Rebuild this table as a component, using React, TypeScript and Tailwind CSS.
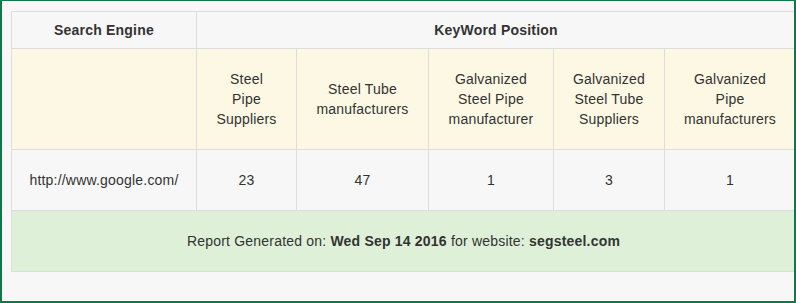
const keywords = [
  ["Steel", "Pipe", "Suppliers"],
  ["Steel Tube", "manufacturers"],
  ["Galvanized", "Steel Pipe", "manufacturer"],
  ["Galvanized", "Steel Tube", "Suppliers"],
  ["Galvanized", "Pipe", "manufacturers"]
];

const positions = [23, 47, 1, 3, 1];

const colWidths = ["w-[185px]", "w-[100px]", "w-[132px]", "w-[125px]", "w-[111px]", "w-[131px]"];

export default function App() {
  return (
    <div className="h-[303px] w-[796px] overflow-hidden border-t border-r-2 border-b-2 border-l-2 border-[#0b7a4b] bg-[#f7f7f7] pt-[10px] pl-[9px] font-['Liberation_Sans',Arial,sans-serif] text-[14px] leading-[20px] tracking-[0.2px] text-[#333]">
      <table className="w-[784px] table-fixed border-collapse text-center">
        <colgroup>
          {colWidths.map((w) => (
            <col key={w} className={w} />
          ))}
        </colgroup>
        <thead>
          <tr>
            <th className="border border-[#ddd] px-2 py-2 font-bold">Search Engine</th>
            <th colSpan={5} className="border border-[#ddd] px-2 py-2 font-bold">
              KeyWord Position
            </th>
          </tr>
        </thead>
        <tbody>
          <tr className="bg-[#fcf8e3]">
            <td className="border border-[#ddd] px-2 py-5"></td>
            {keywords.map((lines, i) => (
              <td key={i} className="border border-[#ddd] px-1 py-5 align-middle whitespace-nowrap">
                {lines.map((line, j) => (
                  <div key={j}>{line}</div>
                ))}
              </td>
            ))}
          </tr>
          <tr>
            <td className="border border-[#ddd] px-2 py-5">http://www.google.com/</td>
            {positions.map((p, i) => (
              <td key={i} className="border border-[#ddd] px-2 py-5">
                {p}
              </td>
            ))}
          </tr>
          <tr className="bg-[#dff0d8]">
            <td colSpan={6} className="border border-[#ddd] px-2 py-5">
              Report Generated on: <b>Wed Sep 14 2016</b> for website: <b>segsteel.com</b>
            </td>
          </tr>
        </tbody>
      </table>
    </div>
  );
}
